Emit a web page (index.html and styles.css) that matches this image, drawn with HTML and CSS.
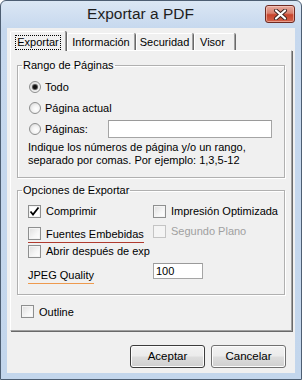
FILE: index.html
```html
<!doctype html>
<html>
<head>
    <meta charset="utf-8">
    <title>Exportar a PDF</title>
    <link rel="stylesheet" href="styles.css">
</head>
<body>
<div class="window">
    <div class="titlebar">
        <div class="title">Exportar a PDF</div>
        <div class="close">
            <svg width="15" height="11" viewBox="0 0 15 11">
                <path d="M3 1.5 L12 9.5 M12 1.5 L3 9.5" stroke="#3a2320" stroke-width="4" stroke-linecap="round"/>
                <path d="M3 1.5 L12 9.5 M12 1.5 L3 9.5" stroke="#ffffff" stroke-width="2.2" stroke-linecap="round"/>
            </svg>
        </div>
    </div>
    <div class="client">
        <div class="tabs">
            <div class="tab active"><span class="focus">Exportar</span></div>
            <div class="tab t-info">Información</div>
            <div class="tab t-sec">Securidad</div>
            <div class="tab t-visor">Visor</div>
        </div>
        <div class="panel">
            <fieldset class="group range">
                <legend>Rango de Páginas</legend>
                <div class="row"><span class="radio on"></span>Todo</div>
                <div class="row"><span class="radio"></span>Página actual</div>
                <div class="row">
                    <span class="radio"></span><span class="pages-label">Páginas:</span>
                    <span class="field wide"></span>
                </div>
                <p class="hint">Indique los números de página y/o un rango,<br>separado por comas. Por ejemplo: 1,3,5-12</p>
            </fieldset>

            <fieldset class="group export">
                <legend>Opciones de Exportar</legend>
                <div class="grid">
                    <div class="cell"><span class="check on"><svg width="11" height="11" viewBox="0 0 11 11"><path d="M1.5 5.5 L4 8.5 L9.5 1.5" fill="none" stroke="#000" stroke-width="1.8"/></svg></span>Comprimir</div>
                    <div class="cell"><span class="check"></span>Impresión Optimizada</div>
                    <div class="cell"><span class="marked red"><span class="check"></span>Fuentes Embebidas</span></div>
                    <div class="cell disabled"><span class="check"></span>Segundo Plano</div>
                    <div class="cell"><span class="check"></span>Abrir después de exp</div>
                    <div class="cell"></div>
                    <div class="cell"><span class="marked orange">JPEG Quality</span></div>
                    <div class="cell"><span class="field small">100</span></div>
                </div>
            </fieldset>

            <div class="row outline"><span class="check"></span>Outline</div>
        </div>
        <div class="buttons">
            <div class="button default">Aceptar</div>
            <div class="button">Cancelar</div>
        </div>
    </div>
</div>
</body>
</html>
```

FILE: styles.css
```css
body {
    margin: 0;
    background: #ffffff;
    font-family: "Liberation Sans", Arial, sans-serif;
    font-size: 11px;
    color: #000000;
}

.window {
    width: 302px;
    height: 380px;
    box-sizing: border-box;
    border: 1px solid #4d5e72;
    border-radius: 6px 6px 0 0;
    background: linear-gradient(#dbe7f4 0, #c6d8ee 28px, #c3d6ec 100%);
    display: flex;
    flex-direction: column;
}

.titlebar {
    height: 27px;
    display: flex;
    align-items: flex-start;
}

.title {
    flex: 1;
    padding-left: 15px;
    text-align: center;
    font-size: 15.5px;
    line-height: 26px;
    color: #1e1e1e;
}

.close {
    width: 30px;
    height: 18px;
    margin: 4px 6px 0 0;
    box-sizing: border-box;
    border: 1px solid #6e2a22;
    border-radius: 3px;
    background: linear-gradient(#e6aa9e 0, #d8806f 45%, #c7432c 55%, #d2624a 100%);
    box-shadow: inset 0 0 0 1px rgba(255, 220, 210, 0.5);
    display: flex;
    align-items: center;
    justify-content: center;
}

.client {
    flex: 1;
    margin: 0 6px 6px 6px;
    background: #f0f0f0;
    padding: 3px 3px 0 3px;
    box-sizing: border-box;
}

.tabs {
    display: flex;
    height: 19px;
    align-items: flex-end;
}

.tab {
    height: 17px;
    box-sizing: border-box;
    border-top: 1px solid #ffffff;
    border-left: 1px solid #ffffff;
    border-right: 1px solid #a0a0a0;
    box-shadow: 1px 0 0 #696969;
    border-radius: 2px 2px 0 0;
    text-align: center;
    line-height: 16px;
    margin-right: 1px;
}

.tab.active {
    width: 56px;
    height: 20px;
    margin-bottom: -1px;
    position: relative;
    z-index: 1;
    background: #f0f0f0;
    padding-top: 2px;
}

.focus {
    border: 1px dotted #000000;
    padding: 0 1px;
    line-height: 13px;
    display: inline-block;
}

.t-info {
    width: 68px;
}

.t-sec {
    width: 57px;
}

.t-visor {
    width: 41px;
    text-align: left;
    padding-left: 5px;
}

.panel {
    height: 281px;
    box-sizing: border-box;
    border-top: 1px solid #ffffff;
    border-left: 1px solid #ffffff;
    border-right: 1px solid #a0a0a0;
    border-bottom: 1px solid #a0a0a0;
    box-shadow: 1px 1px 0 #696969;
    padding: 7px 6px 0 6px;
}

.group {
    margin: 0;
    padding: 0 0 0 10px;
    border: 1px solid #b0b0b0;
    box-shadow: inset 1px 1px 0 #ffffff, 1px 1px 0 #ffffff;
}

.group legend {
    margin-left: -6px;
    padding: 0 1px;
    line-height: 14px;
}

.range {
    padding-top: 4px;
    padding-bottom: 10px;
}

.row {
    height: 21px;
    display: flex;
    align-items: center;
}

.radio {
    width: 12px;
    height: 12px;
    box-sizing: border-box;
    margin: 0 4px 0 1px;
    border: 1px solid #8e8f8f;
    border-radius: 50%;
    background: radial-gradient(circle at 60% 60%, #ffffff 0, #f4f4f4 40%, #d0d0d0 100%);
    display: flex;
    align-items: center;
    justify-content: center;
}

.radio.on::after {
    content: "";
    width: 4px;
    height: 4px;
    border-radius: 50%;
    background: #101010;
    box-shadow: 0 0 1px 1px #404040;
}

.pages-label {
    width: 63px;
}

.field {
    box-sizing: border-box;
    background: #ffffff;
    border: 1px solid #a5a5a5;
    border-top-color: #9a9a9a;
}

.field.wide {
    width: 164px;
    height: 18px;
}

.field.small {
    width: 50px;
    height: 16px;
    padding-left: 2px;
    line-height: 14px;
}

.hint {
    margin: 2px 0 0 0;
    line-height: 13px;
}

.export {
    margin-top: 5px;
    padding-top: 4px;
    padding-bottom: 13px;
}

.grid {
    display: grid;
    grid-template-columns: 125px 1fr;
    grid-auto-rows: 20px;
}

.cell {
    display: flex;
    align-items: center;
    white-space: nowrap;
}

.cell.disabled {
    color: #a0a0a0;
}

.check {
    width: 13px;
    height: 13px;
    box-sizing: border-box;
    margin-right: 5px;
    border: 1px solid #8e8f8f;
    background: linear-gradient(135deg, #dedede 0, #f6f6f6 60%, #ffffff 100%);
    box-shadow: inset 0 0 0 1px #f4f4f4;
    display: flex;
    align-items: center;
    justify-content: center;
    flex: none;
}

.check.on {
    background: #ffffff;
}

.disabled .check {
    border-color: #c4c4c4;
    background: #f4f4f4;
}

.marked {
    display: flex;
    align-items: center;
    height: 15px;
    margin-top: 7px;
    padding-bottom: 1px;
}

.marked.red {
    border-bottom: 1px solid #b03a2e;
}

.marked.orange {
    border-bottom: 1px solid #ee9a4e;
    margin-top: 9px;
}

.outline {
    margin: 6px 0 0 4px;
}

.buttons {
    display: flex;
    justify-content: flex-end;
    gap: 6px;
    margin: 14px 6px 0 0;
}

.button {
    width: 75px;
    height: 23px;
    box-sizing: border-box;
    border: 1px solid #707070;
    border-radius: 3px;
    background: linear-gradient(#f2f2f2 0, #ebebeb 48%, #dddddd 52%, #cfcfcf 100%);
    box-shadow: inset 0 0 0 1px #fcfcfc;
    text-align: center;
    line-height: 21px;
    font-size: 11.5px;
}

.button.default {
    border-color: #3c3c3c;
}
```
